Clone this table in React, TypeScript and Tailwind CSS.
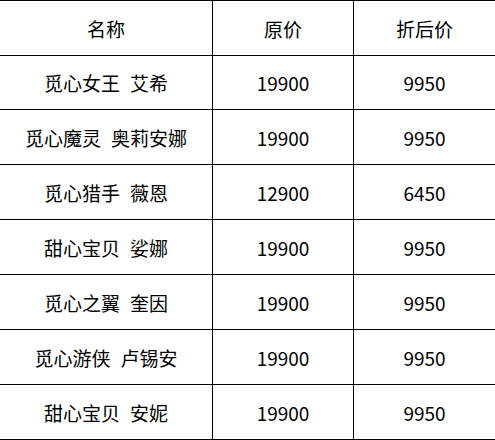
import React from 'react';

const rows: [string, string, string, string][] = [
  ['觅心女王', '艾希', '19900', '9950'],
  ['觅心魔灵', '奥莉安娜', '19900', '9950'],
  ['觅心猎手', '薇恩', '12900', '6450'],
  ['甜心宝贝', '娑娜', '19900', '9950'],
  ['觅心之翼', '奎因', '19900', '9950'],
  ['觅心游侠', '卢锡安', '19900', '9950'],
  ['甜心宝贝', '安妮', '19900', '9950'],
];

const Row: React.FC<{ cells: React.ReactNode[]; h: string }> = ({ cells, h }) => (
  <div className={`flex border-b border-black ${h}`}>
    <div className="w-[213px] flex items-center justify-center border-r border-black">{cells[0]}</div>
    <div className="w-[141px] flex items-center justify-center border-r border-black">{cells[1]}</div>
    <div className="flex-1 flex items-center justify-center">{cells[2]}</div>
  </div>
);

export default function App() {
  return (
    <div
      className="w-[495px] h-[440px] bg-white text-black text-[19px] leading-none border-t border-black"
      style={{ fontFamily: '"Noto Sans CJK SC", "Noto Sans", sans-serif' }}
    >
      <Row h="h-[55px]" cells={['名称', '原价', '折后价']} />
      {rows.map((r, i) => (
        <Row
          key={i}
          h={i === 0 ? 'h-[54px]' : 'h-[55px]'}
          cells={[
            <span className="flex gap-[10px]">
              <span>{r[0]}</span>
              <span>{r[1]}</span>
            </span>,
            r[2],
            r[3],
          ]}
        />
      ))}
    </div>
  );
}
